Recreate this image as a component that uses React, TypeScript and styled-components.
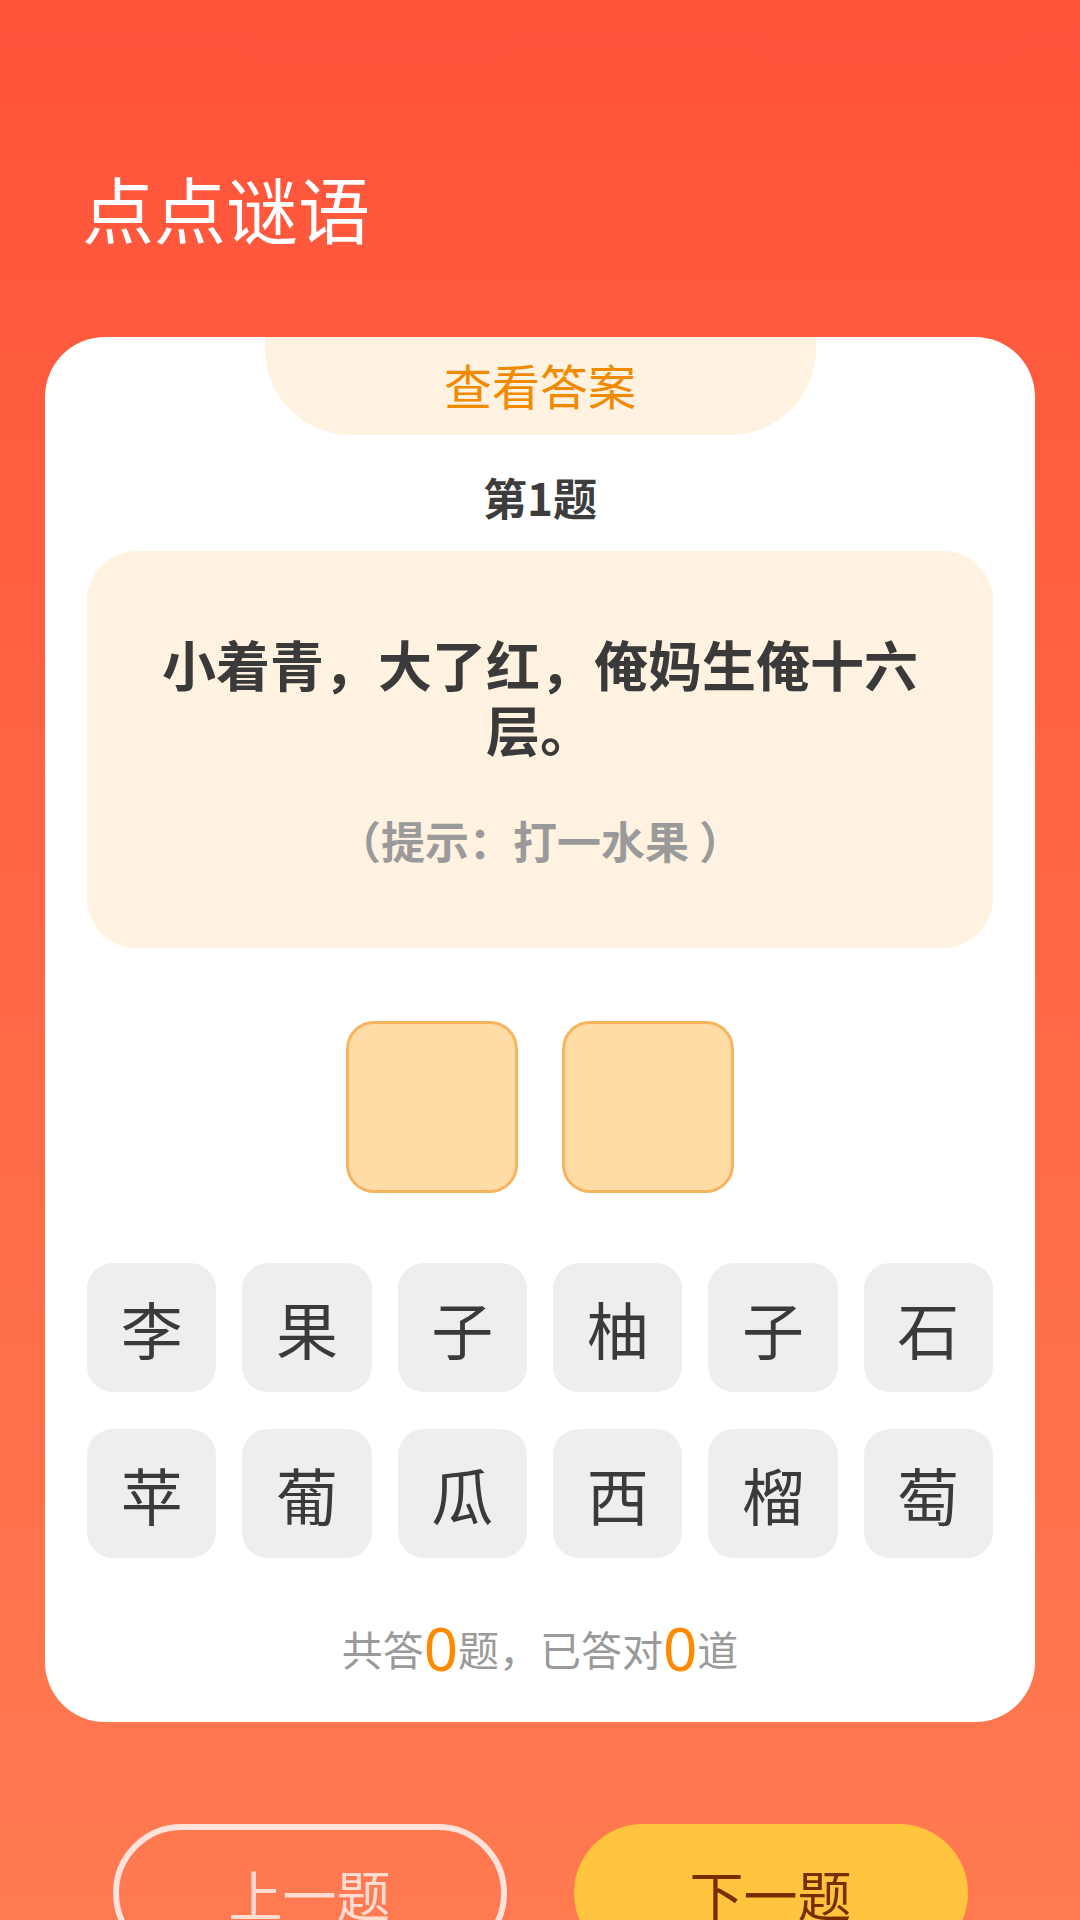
import React from 'react'
import styled, { createGlobalStyle } from 'styled-components'

const GlobalStyle = createGlobalStyle`
  html, body {
    margin: 0;
    padding: 0;
  }
  body {
    font-family: 'Noto Sans CJK SC', 'Noto Sans', sans-serif;
  }
`

const riddle = '小着青，大了红，俺妈生俺十六层。'
const hint = '（提示：打一水果 ）'
const letters = ['李', '果', '子', '柚', '子', '石', '苹', '葡', '瓜', '西', '榴', '萄']

export default function App() {
  return (
    <>
      <GlobalStyle />
      <Page>
        <Header>
          <Title>点点谜语</Title>
        </Header>
        <Card>
          <AnswerTab>查看答案</AnswerTab>
          <QuestionNo>第1题</QuestionNo>
          <RiddleBox>
            <RiddleText>{riddle}</RiddleText>
            <HintText>{hint}</HintText>
          </RiddleBox>
          <SlotRow>
            <Slot />
            <Slot />
          </SlotRow>
          <LetterGrid>
            {letters.map((ch, i) => (
              <LetterKey key={i}>{ch}</LetterKey>
            ))}
          </LetterGrid>
          <Stats>
            共答<Num>0</Num>题，已答对<Num>0</Num>道
          </Stats>
        </Card>
        <NavRow>
          <NavButton $primary={false}>上一题</NavButton>
          <NavButton $primary>下一题</NavButton>
        </NavRow>
      </Page>
    </>
  )
}

const Page = styled.div`
  width: 1080px;
  height: 1920px;
  overflow: hidden;
  background: linear-gradient(180deg, #ff533a 0%, #ff6a47 55%, #ff7a51 100%);
  box-sizing: border-box;
`
const Header = styled.div`
  height: 337px;
  box-sizing: border-box;
  padding: 171px 0 0 82px;
`
const Title = styled.div`
  font-size: 72px;
  line-height: 72px;
  font-weight: 400;
  color: #ffffff;
`
const Card = styled.div`
  margin: 0 45px;
  background: #ffffff;
  border-radius: 60px;
  padding: 0 42px 44px;
  display: flex;
  flex-direction: column;
  align-items: center;
`
const AnswerTab = styled.div`
  width: 551px;
  height: 98px;
  background: #fff2e0;
  border-radius: 0 0 86px 86px;
  color: #f28a00;
  font-size: 48px;
  line-height: 94px;
  text-align: center;
`
const QuestionNo = styled.div`
  margin-top: 32px;
  font-size: 44px;
  line-height: 60px;
  font-weight: 700;
  color: #3d3d3d;
`
const RiddleBox = styled.div`
  margin-top: 24px;
  width: 100%;
  box-sizing: border-box;
  background: #fff2e0;
  border-radius: 50px;
  padding: 80px 56px 82px;
  text-align: center;
`
const RiddleText = styled.div`
  font-size: 54px;
  line-height: 65px;
  font-weight: 700;
  color: #3a3a3a;
`
const HintText = styled.div`
  margin-top: 53px;
  font-size: 44px;
  line-height: 52px;
  font-weight: 700;
  color: #9a9a9a;
`
const SlotRow = styled.div`
  margin-top: 73px;
  display: flex;
  gap: 44px;
`
const Slot = styled.div`
  width: 172px;
  height: 172px;
  box-sizing: border-box;
  background: #ffdba5;
  border: 3px solid #f6b45f;
  border-radius: 28px;
`
const LetterGrid = styled.div`
  margin-top: 70px;
  width: 100%;
  display: grid;
  grid-template-columns: repeat(6, 1fr);
  column-gap: 26px;
  row-gap: 37px;
`
const LetterKey = styled.div`
  height: 129px;
  background: #eeeeee;
  border-radius: 26px;
  display: flex;
  align-items: center;
  justify-content: center;
  font-size: 62px;
  color: #3a3a3a;
`
const Stats = styled.div`
  margin-top: 60px;
  font-size: 41px;
  line-height: 60px;
  color: #9a9a9a;
  display: flex;
  align-items: center;
`
const Num = styled.span`
  font-size: 60px;
  color: #ff8a00;
  font-family: 'Noto Sans', sans-serif;
`
const NavRow = styled.div`
  margin-top: 102px;
  display: flex;
  justify-content: center;
  gap: 67px;
`
const NavButton = styled.div<{ $primary: boolean }>`
  width: 394px;
  height: 138px;
  box-sizing: border-box;
  border-radius: 69px;
  display: flex;
  align-items: center;
  justify-content: center;
  font-size: 54px;
  background: ${(p) => (p.$primary ? '#ffc53f' : 'transparent')};
  color: ${(p) => (p.$primary ? '#7a2e00' : '#ffdcd2')};
  border: ${(p) => (p.$primary ? 'none' : '6px solid #ffe2d9')};
`
